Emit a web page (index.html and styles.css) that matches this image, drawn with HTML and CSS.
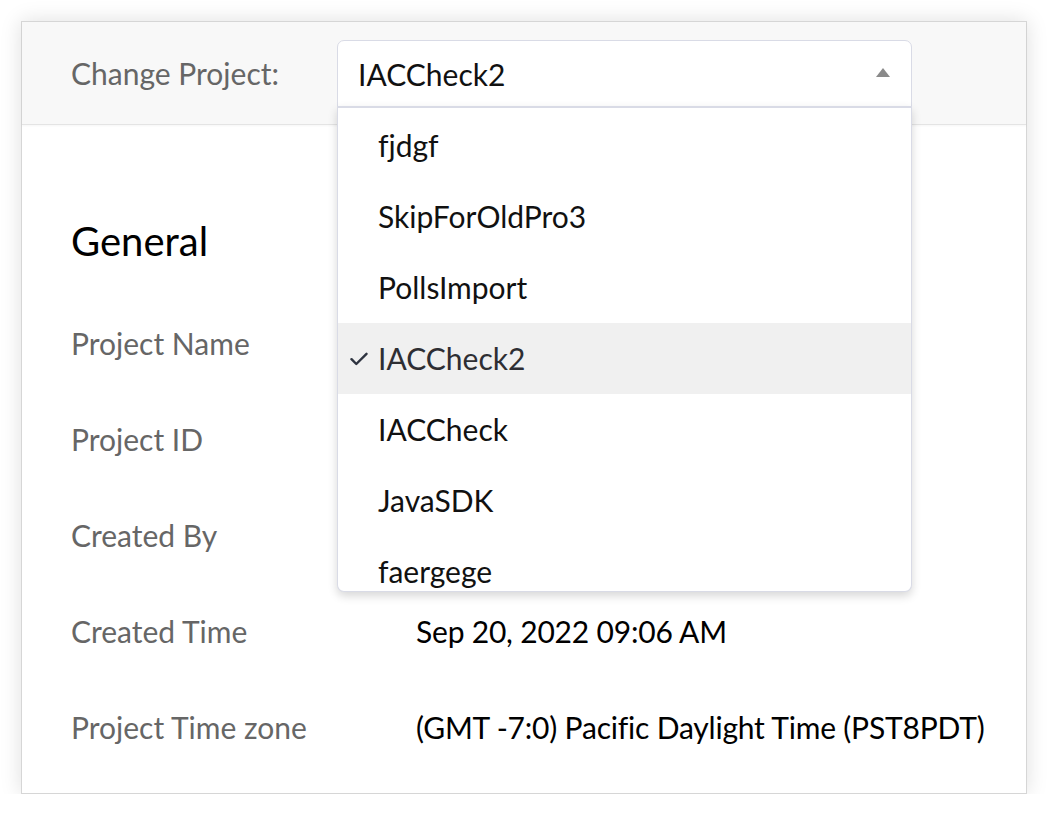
FILE: index.html
```html
<!DOCTYPE html>
<html>
<head>
<meta charset="utf-8">
<link rel="stylesheet" href="styles.css">
</head>
<body>
<div class="card">
  <div class="header">
    <div class="header-label">Change Project:</div>
    <div class="select-wrap">
      <div class="select">
        <span class="select-value">IACCheck2</span>
        <span class="caret"></span>
      </div>
      <div class="dropdown">
        <ul class="options">
          <li class="option">fjdgf</li>
          <li class="option">SkipForOldPro3</li>
          <li class="option">PollsImport</li>
          <li class="option selected"><svg class="check" viewBox="0 0 18 14" width="18" height="14"><path d="M1.5 7.2 L6.3 12 L16.5 1.8" fill="none" stroke="#2e3440" stroke-width="2.4" stroke-linecap="round" stroke-linejoin="round"/></svg>IACCheck2</li>
          <li class="option">IACCheck</li>
          <li class="option">JavaSDK</li>
          <li class="option">faergege</li>
        </ul>
      </div>
    </div>
  </div>
  <div class="body">
    <h2 class="title">General</h2>
    <div class="row"><div class="label">Project Name</div><div class="value"></div></div>
    <div class="row"><div class="label">Project ID</div><div class="value"></div></div>
    <div class="row"><div class="label">Created By</div><div class="value"></div></div>
    <div class="row"><div class="label">Created Time</div><div class="value">Sep 20, 2022 09:06 AM</div></div>
    <div class="row"><div class="label">Project Time zone</div><div class="value">(GMT -7:0) Pacific Daylight Time (PST8PDT)</div></div>
  </div>
</div>
</body>
</html>
```

FILE: styles.css
```css
* { box-sizing: border-box; }
html, body { margin: 0; padding: 0; background: #fff; }
body {
  font-family: Lato, "Open Sans", sans-serif;
  font-size: 30px;
  font-variant-ligatures: none;
  padding: 21px 21px 0 21px;
}
.card {
  width: 1006px;
  height: 773px;
  border: 1px solid #d6d6d6;
  background: #fff;
  box-shadow: 0 0 20px rgba(0,0,0,0.13);
}
.header {
  height: 103px;
  background: #f8f8f8;
  border-bottom: 1px solid #e4e4e4;
  box-shadow: 0 1px 2px rgba(0,0,0,0.04);
  display: flex;
  align-items: flex-start;
  padding: 18px 0 0 49px;
}
.header-label {
  width: 266px;
  color: #666;
  line-height: 66px;
}
.select-wrap {
  position: relative;
  width: 575px;
}
.select {
  height: 67px;
  background: #fff;
  border: 1px solid #d9dbe6;
  border-radius: 7px 7px 0 0;
  display: flex;
  align-items: center;
  justify-content: space-between;
  padding: 0 21px 0 20px;
  color: #111;
}
.select-value { line-height: 66px; }
.caret {
  width: 0; height: 0;
  border-left: 7px solid transparent;
  border-right: 7px solid transparent;
  border-bottom: 9px solid #8a8a8a;
  margin-top: -2px;
}
.dropdown {
  position: absolute;
  left: 0;
  top: 66px;
  width: 575px;
  height: 486px;
  background: #fff;
  border: 1px solid #d9dbe6;
  border-top: 2px solid #d9dbe6;
  border-radius: 0 0 7px 7px;
  box-shadow: 0 4px 10px rgba(0,0,0,0.16);
  overflow: hidden;
  z-index: 5;
}
.options {
  list-style: none;
  margin: 0;
  padding: 2px 0 0 0;
}
.option {
  height: 71px;
  line-height: 71px;
  padding-left: 40px;
  color: #111;
  position: relative;
}
.option.selected {
  background: #f0f0f0;
  color: #2e2e33;
}
.check {
  position: absolute;
  left: 12px;
  top: 29px;
}
.body {
  padding: 92px 0 0 49px;
}
.title {
  margin: 0;
  font-size: 40px;
  font-weight: 400;
  line-height: 48px;
  color: #000;
  margin-bottom: 30px;
}
.row {
  display: flex;
  height: 96px;
  align-items: center;
}
.label {
  width: 345px;
  color: #666;
}
.value {
  color: #000;
  letter-spacing: -0.2px;
}
```
